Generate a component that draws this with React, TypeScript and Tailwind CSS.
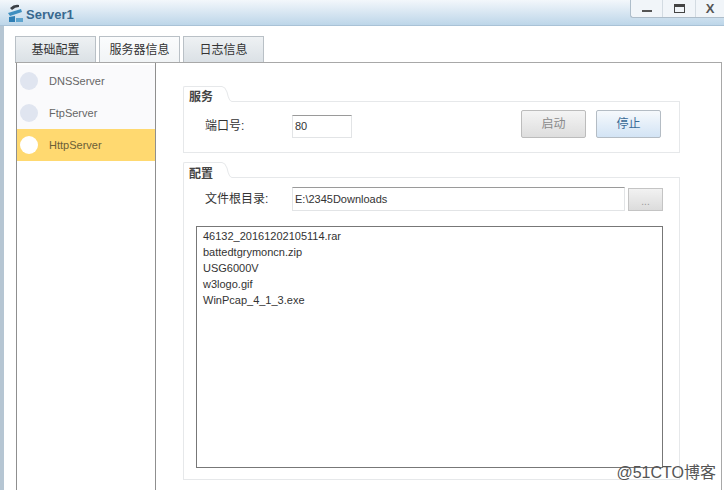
import type { ReactNode } from "react";

const font = "font-['Liberation_Sans','Noto_Sans_CJK_SC',sans-serif]";

const servers = [
  { name: "DNSServer", active: false },
  { name: "FtpServer", active: false },
  { name: "HttpServer", active: true },
];

const files = [
  "46132_20161202105114.rar",
  "battedtgrymoncn.zip",
  "USG6000V",
  "w3logo.gif",
  "WinPcap_4_1_3.exe",
];

function ServerLogo() {
  return (
    <svg width="18" height="20" viewBox="0 0 18 20" className="ml-[6px] mt-[3px] shrink-0">
      <path d="M4 4 Q8 0 13 1 L13 3 Q9 3 6 6 Z" fill="#3a3f45" />
      <path d="M2 9 L15 5 L16 8 L4 12 Z" fill="#3f8fc0" />
      <path d="M3 13 L9 12 L9 18 L3 18 Z" fill="#2f7fb5" />
      <path d="M10 14 H17 V18 H10 Z" fill="#5fa5cf" />
    </svg>
  );
}

function WindowButtons() {
  return (
    <div className="absolute right-0 top-0 flex h-[18px] w-[94px] rounded-bl-[3px] border-b border-l border-[#aebdca] bg-[#f1f5f9]">
      <div className="flex w-[32px] items-end justify-center border-r border-[#d3dbe2] pb-[5px]">
        <div className="h-[2px] w-[10px] bg-[#555]" />
      </div>
      <div className="flex w-[33px] items-center justify-center border-r border-[#d3dbe2]">
        <div className="h-[9px] w-[11px] border border-t-[3px] border-[#444]" />
      </div>
      <div className="flex flex-1 items-center justify-center text-[13px] font-bold leading-none text-[#555]">X</div>
    </div>
  );
}

function Tab({ label, active }: { label: string; active?: boolean }) {
  return (
    <div
      className={`flex h-[26px] w-[81px] items-center justify-center border border-b-0 border-[#b9c0c6] text-[12px] text-[#333] ${
        active ? "bg-gradient-to-b from-[#fbfcfd] to-[#f1f4f6]" : "bg-gradient-to-b from-[#eef1f3] to-[#dbe1e6]"
      }`}
    >
      {label}
    </div>
  );
}

function Group({
  title,
  children,
  className,
  titleClass,
}: {
  title: string;
  children: ReactNode;
  className?: string;
  titleClass: string;
}) {
  return (
    <div className={`flex flex-col ${className ?? ""}`}>
      <div className="flex h-[16px] shrink-0">
        <div
          className={`w-[39px] rounded-tl-[2px] border-l border-t border-[#e6e8ea] pl-[5px] text-[12px] font-bold text-[#444] ${titleClass}`}
        >
          {title}
        </div>
        <svg width="10" height="16" viewBox="0 0 10 16" className="shrink-0">
          <path d="M0 .5 Q3 .5 5 6 Q7 15.5 10 15.5" fill="none" stroke="#e6e8ea" />
        </svg>
        <div className="flex-1 border-b border-[#e6e8ea]" />
      </div>
      <div className="flex min-h-0 flex-1 flex-col border-x border-b border-[#e6e8ea]">{children}</div>
    </div>
  );
}

function TextBox({ value, className }: { value: string; className: string }) {
  return (
    <div
      className={`flex items-center border border-[#e2e4e6] border-t-[#9a9a9a] bg-white pl-[2px] text-[11px] text-[#333] ${className}`}
    >
      {value}
    </div>
  );
}

export default function App() {
  return (
    <div className={`relative flex h-[490px] w-[724px] flex-col overflow-hidden bg-white ${font}`}>
      <div className="flex h-[26px] shrink-0 items-center gap-[2px] border-b border-[#a9c2d6] bg-gradient-to-b from-[#f3f7fb] to-[#bdd6e9]">
        <ServerLogo />
        <span className="mt-[5px] text-[13px] font-bold text-[#38698f]">Server1</span>
      </div>
      <WindowButtons />

      <div className="flex min-h-0 flex-1">
        <div className="w-[4px] shrink-0 bg-[#b6c6d3]" />
        <div className="flex min-w-0 flex-1 flex-col">
          <div className="flex gap-[3px] pl-[11px] pt-[10px]">
            <Tab label="基础配置" />
            <Tab label="服务器信息" active />
            <Tab label="日志信息" />
          </div>

          <div className="mr-[2px] ml-[11px] flex min-h-0 flex-1 border-r border-t border-[#a8a8a8]">
            <div className="ml-[1px] flex w-[140px] shrink-0 flex-col border-x border-[#8f8f8f] bg-white pt-[2px]">
              {servers.map((s) => (
                <div
                  key={s.name}
                  className={`flex h-[32px] items-center gap-[11px] pl-[3px] text-[11px] ${
                    s.active ? "bg-[#ffd970] text-[#6b6038]" : "bg-[#fafafc] text-[#666]"
                  }`}
                >
                  <div className={`h-[18px] w-[18px] rounded-full ${s.active ? "bg-white" : "bg-[#e0e5f0]"}`} />
                  {s.name}
                </div>
              ))}
            </div>

            <div className="flex min-w-0 flex-1 flex-col gap-[9px] pb-[10px] pl-[27px] pr-[41px] pt-[23px]">
              <Group title="服务" className="h-[67px]" titleClass="leading-[21px]">
                <div className="flex flex-1 items-start pl-[21px] pr-[18px] pt-[8px]">
                  <span className="mt-[7px] w-[87px] text-[12px] text-[#333]">端口号:</span>
                  <TextBox value="80" className="mt-[5px] h-[23px] w-[60px]" />
                  <button className="ml-auto h-[28px] w-[65px] rounded-[2px] border border-[#bcbcbc] bg-gradient-to-b from-[#f4f4f4] to-[#dedede] text-[12px] text-[#8a8a8a]">
                    启动
                  </button>
                  <button className="ml-[10px] h-[28px] w-[65px] rounded-[2px] border border-[#b4bcc4] bg-gradient-to-b from-[#f6f9fc] to-[#d3e4f5] text-[12px] text-[#3a6a96]">
                    停止
                  </button>
                </div>
              </Group>

              <Group title="配置" className="min-h-0 flex-1" titleClass="leading-[23px]">
                <div className="flex flex-1 flex-col pl-[12px] pr-[16px] pt-[9px]">
                  <div className="flex items-center pl-[9px]">
                    <span className="w-[87px] text-[12px] text-[#333]">文件根目录:</span>
                    <TextBox value="E:\2345Downloads" className="h-[24px] w-[333px]" />
                    <div className="ml-[3px] flex h-[23px] w-[35px] items-end justify-center border border-[#c4c4c4] bg-gradient-to-b from-[#f2f2f2] to-[#dcdcdc] text-[10px] leading-[17px] text-[#999]">
                      ...
                    </div>
                  </div>
                  <div className="mb-[11px] mt-[15px] flex-1 border border-[#777] bg-white pl-[6px] pt-[1px] text-[11px] leading-[16px] text-[#333]">
                    {files.map((f) => (
                      <div key={f}>{f}</div>
                    ))}
                  </div>
                </div>
              </Group>
            </div>
          </div>
        </div>
      </div>

      <div className="absolute bottom-[9px] right-[8px] text-[16px] leading-none text-[#555]">@51CTO博客</div>
    </div>
  );
}
